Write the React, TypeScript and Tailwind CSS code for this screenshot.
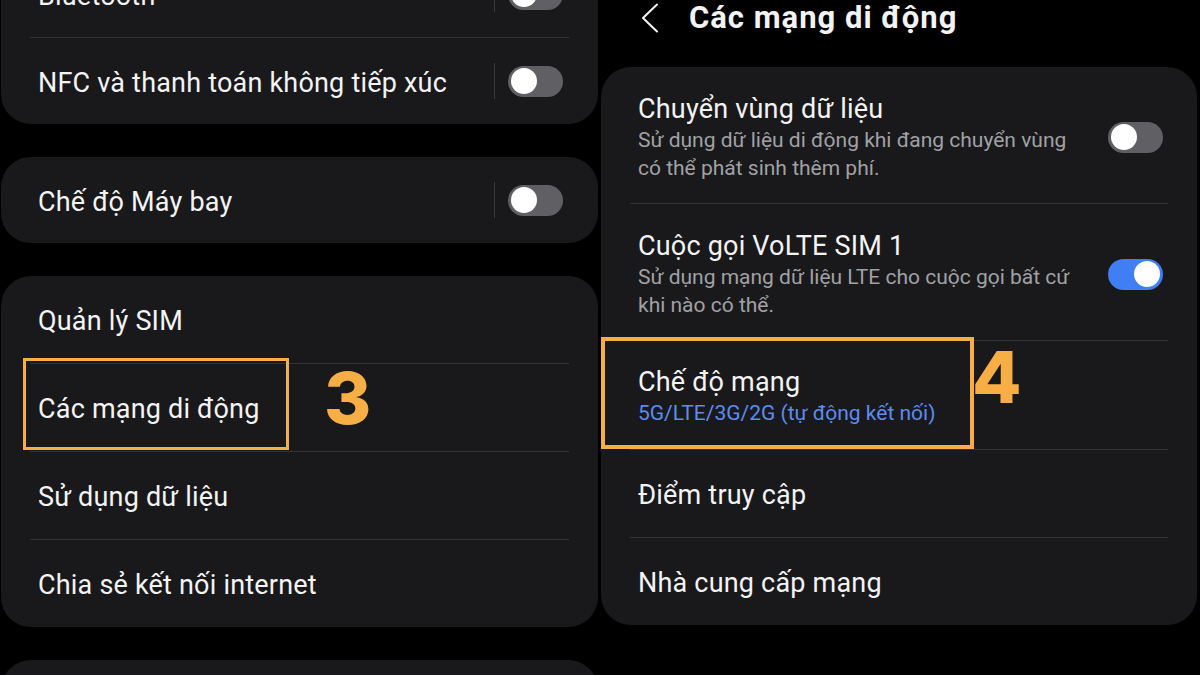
const font = { fontFamily: 'Roboto, "Noto Sans", sans-serif' }

function Toggle({ on = false }: { on?: boolean }) {
  return (
    <div
      className={`flex h-[31px] w-[55px] shrink-0 items-center rounded-full px-[3px] ${
        on ? 'justify-end bg-[#3f7ef3]' : 'justify-start bg-[#606064]'
      }`}
    >
      <div className="h-[26px] w-[26px] rounded-full bg-white" />
    </div>
  )
}

function Divider() {
  return <div className="mx-[29px] h-px bg-[#343436]" />
}

function ToggleRow({ label }: { label: string }) {
  return (
    <div className="flex h-[86px] items-center pl-[37px] pr-[35px]">
      <span className="flex-1 pt-[3px] text-[27px] leading-[34px] tracking-[0.2px] text-[#f3f3f3]">{label}</span>
      <div className="mr-[13px] h-[36px] w-px bg-[#3a3a3c]" />
      <Toggle />
    </div>
  )
}

function NavRow({ label, children }: { label: string; children?: React.ReactNode }) {
  return (
    <div className="relative flex h-[87px] items-center pl-[37px]">
      <span className="pt-[2px] text-[27px] leading-[34px] tracking-[0.2px] text-[#f3f3f3]">{label}</span>
      {children}
    </div>
  )
}

function DetailRow({
  title,
  sub,
  on,
}: {
  title: string
  sub: string[]
  on?: boolean
}) {
  return (
    <div className="flex items-center pb-[21px] pl-[37px] pr-[34px] pt-[25px]">
      <div className="flex-1">
        <p className="text-[27px] leading-[34px] tracking-[0.2px] text-[#f3f3f3]">{title}</p>
        {sub.map((line) => (
          <p key={line} className="text-[21px] leading-[28px] text-[#a1a1a5]">
            {line}
          </p>
        ))}
      </div>
      <Toggle on={on} />
    </div>
  )
}

export default function App() {
  return (
    <div className="flex h-[675px] w-[1200px] items-start overflow-hidden bg-black" style={font}>
      {/* Left: connections list */}
      <div className="-mt-[49px] flex w-[600px] shrink-0 flex-col gap-[33px] pl-[1px] pr-[2px]">
        <div className="shrink-0 rounded-[30px] bg-[#19191b]">
          <ToggleRow label="Bluetooth" />
          <Divider />
          <ToggleRow label="NFC và thanh toán không tiếp xúc" />
        </div>

        <div className="shrink-0 rounded-[30px] bg-[#19191b]">
          <ToggleRow label="Chế độ Máy bay" />
        </div>

        <div className="shrink-0 rounded-[30px] bg-[#19191b]">
          <NavRow label="Quản lý SIM" />
          <Divider />
          <NavRow label="Các mạng di động">
            <div className="absolute left-[22px] top-[-6px] h-[92px] w-[266px] border-[3px] border-[#f6ae45]" />
            <span className="absolute left-[323px] top-[-2px] font-['Inter'] text-[72px] font-extrabold leading-none text-[#f6ae45]">
              3
            </span>
          </NavRow>
          <Divider />
          <NavRow label="Sử dụng dữ liệu" />
          <Divider />
          <NavRow label="Chia sẻ kết nối internet" />
        </div>

        <div className="h-[120px] shrink-0 rounded-[30px] bg-[#19191b]" />
      </div>

      {/* Right: mobile networks */}
      <div className="flex w-[600px] shrink-0 flex-col pl-[1px] pr-[3px]">
        <div className="flex h-[36px] items-center pl-[40px]">
          <svg width="18" height="30" viewBox="0 0 18 30" fill="none" className="shrink-0">
            <polyline
              points="16,1.5 2,15 16,28.5"
              stroke="#f3f3f3"
              strokeWidth="2"
              strokeLinecap="round"
              strokeLinejoin="round"
            />
          </svg>
          <h1 className="ml-[30px] text-[31px] font-bold leading-[36px] tracking-[1px] text-[#f3f3f3]">
            Các mạng di động
          </h1>
        </div>

        <div className="mt-[31px] rounded-[30px] bg-[#19191b]">
          <DetailRow
            title="Chuyển vùng dữ liệu"
            sub={['Sử dụng dữ liệu di động khi đang chuyển vùng', 'có thể phát sinh thêm phí.']}
          />
          <Divider />
          <DetailRow
            title="Cuộc gọi VoLTE SIM 1"
            sub={['Sử dụng mạng dữ liệu LTE cho cuộc gọi bất cứ', 'khi nào có thể.']}
            on
          />
          <Divider />
          <div className="relative pb-[22px] pl-[37px] pt-[24px]">
            <p className="text-[27px] leading-[34px] tracking-[0.2px] text-[#f3f3f3]">Chế độ mạng</p>
            <p className="text-[21px] leading-[28px] text-[#5b8cf2]">5G/LTE/3G/2G (tự động kết nối)</p>
            <div className="absolute left-0 top-[-4px] h-[112px] w-[373px] border-[4px] border-[#f6ae45]" />
            <span className="absolute left-[371px] top-[0px] font-['Inter'] text-[72px] font-extrabold leading-none text-[#f6ae45]">
              4
            </span>
          </div>
          <Divider />
          <NavRow label="Điểm truy cập" />
          <Divider />
          <NavRow label="Nhà cung cấp mạng" />
        </div>
      </div>
    </div>
  )
}
